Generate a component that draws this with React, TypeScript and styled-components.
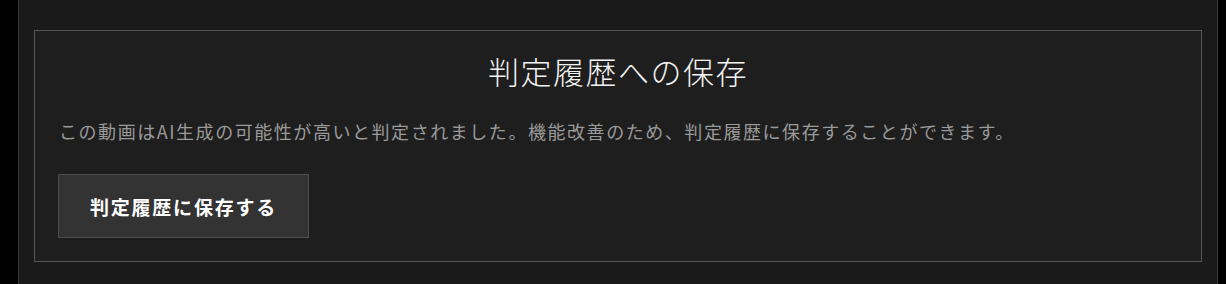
import React from 'react'
import styled, { createGlobalStyle } from 'styled-components'

const GlobalStyle = createGlobalStyle`
    html, body {
        margin: 0;
        padding: 0;
        background: #000;
    }
    body {
        font-family: "Noto Sans CJK JP", "Noto Sans", sans-serif;
    }
`

const Page = styled.div`
    display: flex;
    min-height: 100vh;
    padding: 0 8px 0 18px;
    box-sizing: border-box;
`

const Panel = styled.div`
    flex: 1;
    background: #1a1a1a;
    border-left: 1px solid #3a3a3a;
    border-right: 1px solid #3a3a3a;
    padding: 30px 15px 22px;
`

const SaveBox = styled.section`
    display: flex;
    flex-direction: column;
    align-items: flex-start;
    background: #1e1e1e;
    border: 1px solid #555;
    padding: 0 23px 23px;
`

const Title = styled.h2`
    align-self: stretch;
    margin: 16px 0 0;
    text-align: center;
    font-size: 31px;
    font-weight: 300;
    line-height: 48px;
    letter-spacing: 1.5px;
    color: #f2f2f2;
`

const Message = styled.p`
    margin: 22px 0 0 1px;
    font-size: 18px;
    line-height: 29px;
    letter-spacing: 1.55px;
    color: #9a9a9a;
`

const SaveButton = styled.button`
    margin-top: 28px;
    width: 251px;
    height: 64px;
    background: #333;
    border: 1px solid #4d4d4d;
    color: #fff;
    font-family: inherit;
    font-size: 19px;
    font-weight: 700;
    letter-spacing: 1.8px;
    cursor: pointer;

    :hover {
        background: #3b3b3b;
    }
`

const App = () => {
    return (
        <>
            <GlobalStyle />
            <Page>
                <Panel>
                    <SaveBox>
                        <Title>判定履歴への保存</Title>
                        <Message>
                            この動画はAI生成の可能性が高いと判定されました。機能改善のため、判定履歴に保存することができます。
                        </Message>
                        <SaveButton>判定履歴に保存する</SaveButton>
                    </SaveBox>
                </Panel>
            </Page>
        </>
    )
}

export default App
